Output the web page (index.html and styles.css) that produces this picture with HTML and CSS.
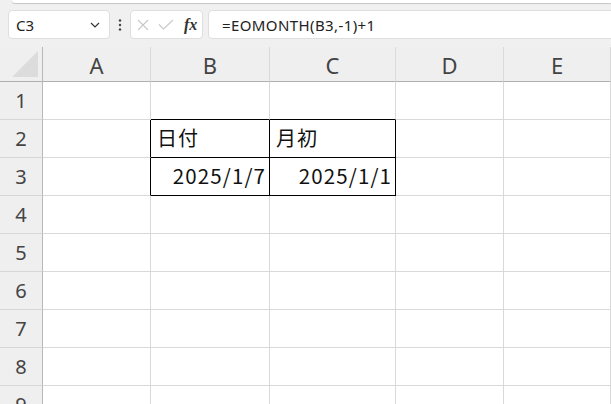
FILE: index.html
```html
<!DOCTYPE html>
<html lang="ja">
<head>
<meta charset="utf-8">
<link rel="stylesheet" href="styles.css">
</head>
<body>
<div class="ribbon-edge"></div>
<div class="formula-row">
  <div class="name-box">
    <span class="name-text">C3</span>
    <svg class="chev" width="10" height="6" viewBox="0 0 10 6"><path d="M1 1 L5 5 L9 1" fill="none" stroke="#333" stroke-width="1.2"/></svg>
  </div>
  <svg class="dots" width="4" height="12" viewBox="0 0 4 12"><circle cx="2" cy="1.5" r="1.2" fill="#444"/><circle cx="2" cy="6" r="1.2" fill="#444"/><circle cx="2" cy="10.5" r="1.2" fill="#444"/></svg>
  <div class="fx-box">
    <svg width="12" height="12" viewBox="0 0 12 12"><path d="M1 1 L11 11 M11 1 L1 11" stroke="#c8c8c8" stroke-width="1.1" fill="none"/></svg>
    <svg width="16" height="11" viewBox="0 0 16 11"><path d="M1 5.5 L5.5 10 L15 1" stroke="#c8c8c8" stroke-width="1.1" fill="none"/></svg>
    <span class="fx">fx</span>
  </div>
  <div class="formula-input">=EOMONTH(B3,-1)+1</div>
</div>
<div class="sheet">
  <div class="corner"><svg width="28" height="28" viewBox="0 0 28 28"><path d="M27 1 L27 27 L1 27 Z" fill="#dcdcdc"/></svg></div>
  <div class="ch">A</div><div class="ch">B</div><div class="ch">C</div><div class="ch">D</div><div class="ch">E</div>

  <div class="rh">1</div><div class="c"></div><div class="c bb"></div><div class="c bb"></div><div class="c"></div><div class="c"></div>
  <div class="rh">2</div><div class="c br"></div><div class="c br bb txt">日付</div><div class="c br bb txt">月初</div><div class="c"></div><div class="c"></div>
  <div class="rh">3</div><div class="c br"></div><div class="c br bb num">2025/1/7</div><div class="c br bb num">2025/1/1</div><div class="c"></div><div class="c"></div>
  <div class="rh">4</div><div class="c"></div><div class="c"></div><div class="c"></div><div class="c"></div><div class="c"></div>
  <div class="rh">5</div><div class="c"></div><div class="c"></div><div class="c"></div><div class="c"></div><div class="c"></div>
  <div class="rh">6</div><div class="c"></div><div class="c"></div><div class="c"></div><div class="c"></div><div class="c"></div>
  <div class="rh">7</div><div class="c"></div><div class="c"></div><div class="c"></div><div class="c"></div><div class="c"></div>
  <div class="rh">8</div><div class="c"></div><div class="c"></div><div class="c"></div><div class="c"></div><div class="c"></div>
  <div class="rh">9</div><div class="c"></div><div class="c"></div><div class="c"></div><div class="c"></div><div class="c"></div>
</div>
</body>
</html>
```

FILE: styles.css
```css
html, body {
  margin: 0;
  padding: 0;
  width: 611px;
  height: 404px;
  overflow: hidden;
  background: #f0f0f0;
  font-family: "Noto Sans", "Noto Sans CJK JP", sans-serif;
}
.ribbon-edge {
  height: 3px;
  margin-left: 12px;
  background: #ffffff;
  border-bottom-left-radius: 4px;
  box-shadow: 0 1px 1px rgba(0,0,0,0.18);
}
.formula-row {
  display: flex;
  align-items: center;
  margin-top: 7px;
  height: 29px;
  padding-left: 8px;
}
.name-box {
  box-sizing: border-box;
  width: 102px;
  height: 29px;
  background: #fff;
  border: 1px solid #dedede;
  border-radius: 4px;
  display: flex;
  align-items: center;
  justify-content: space-between;
  padding: 0 9px 0 7px;
}
.name-text {
  font-size: 15px;
  color: #222;
}
.chev { margin-top: 1px; }
.dots {
  margin-left: 8px;
  margin-right: 8px;
}
.fx-box {
  box-sizing: border-box;
  width: 73px;
  height: 29px;
  background: #fff;
  border: 1px solid #dedede;
  border-radius: 4px;
  display: flex;
  align-items: center;
  padding-left: 6px;
  gap: 9px;
}
.fx {
  font-family: "Liberation Serif", serif;
  font-style: italic;
  font-weight: bold;
  font-size: 16px;
  color: #333;
  margin-left: 1px;
}
.formula-input {
  box-sizing: border-box;
  flex: 1;
  height: 29px;
  margin-left: 5px;
  margin-right: -10px;
  background: #fff;
  border: 1px solid #dedede;
  border-radius: 4px;
  padding-left: 13px;
  display: flex;
  align-items: center;
  font-size: 15px;
  letter-spacing: 0.4px;
  color: #222;
}
.sheet {
  margin-top: 8px;
  display: grid;
  grid-template-columns: 43px 108px 119px 126px 108px 107px;
  grid-template-rows: 35px repeat(9, 38px);
  background: #fff;
}
.corner {
  background: #efefef;
  border-right: 1px solid #b8b8b8;
  border-bottom: 1px solid #b0b0b0;
  display: flex;
  align-items: flex-end;
  justify-content: flex-end;
  padding: 0 3px 3px 0;
  box-sizing: border-box;
}
.ch {
  background: #efefef;
  border-right: 1px solid #dadada;
  border-bottom: 1px solid #b0b0b0;
  box-sizing: border-box;
  display: flex;
  align-items: center;
  justify-content: center;
  font-size: 22px;
  color: #444;
  padding-top: 1px;
}
.rh {
  background: #efefef;
  border-right: 1px solid #b8b8b8;
  border-bottom: 1px solid #d6d6d6;
  box-sizing: border-box;
  display: flex;
  align-items: center;
  justify-content: center;
  font-size: 20px;
  color: #444;
}
.c {
  box-sizing: border-box;
  border-right: 1px solid #d9d9d9;
  border-bottom: 1px solid #d9d9d9;
  display: flex;
  align-items: center;
  font-family: "Noto Sans CJK JP", sans-serif;
  font-size: 20px;
  color: #111;
}
.c.br { border-right-color: #000; }
.c.bb { border-bottom-color: #000; }
.txt {
  justify-content: flex-start;
  padding-left: 6px;
  padding-bottom: 2px;
  letter-spacing: 1px;
}
.num {
  justify-content: flex-end;
  padding-right: 3px;
  padding-bottom: 3px;
  font-size: 20.5px;
  letter-spacing: 1.1px;
}
```
